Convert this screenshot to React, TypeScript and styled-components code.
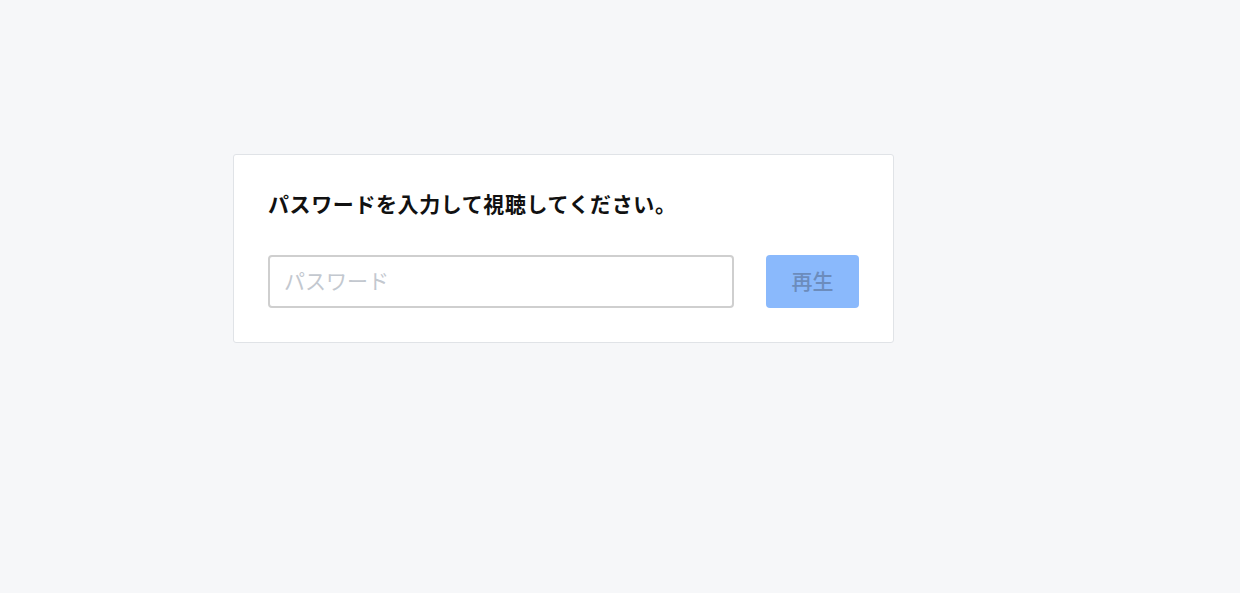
import React from "react";
import styled, { createGlobalStyle } from "styled-components";

const Global = createGlobalStyle`
  html, body { margin: 0; padding: 0; background: #f6f7f9; }
  body { font-family: "Noto Sans CJK JP", "Noto Sans", sans-serif; }
`;

const Page = styled.div`
  min-height: 593px;
  padding: 154px 0 0 233px;
  box-sizing: border-box;
`;

const Card = styled.div`
  width: 661px;
  box-sizing: border-box;
  background: #ffffff;
  border: 1px solid #e0e3e7;
  border-radius: 3px;
  padding: 34px 33px 34px 34px;
`;

const Title = styled.h2`
  margin: 0;
  font-size: 21px;
  line-height: 28px;
  font-weight: 700;
  letter-spacing: 0.6px;
  color: #111;
`;

const Row = styled.div`
  display: flex;
  align-items: center;
  gap: 32px;
  margin-top: 38px;
`;

const Input = styled.input`
  width: 466px;
  height: 53px;
  box-sizing: border-box;
  border: 2px solid #cfcfcf;
  border-radius: 4px;
  padding: 0 14px 3px;
  font-family: "Noto Sans CJK JP", sans-serif;
  font-size: 21px;
  color: #333;
  background: #fff;
  outline: none;
  &::placeholder { color: #c3c8cf; }
`;

const Button = styled.button`
  width: 93px;
  height: 53px;
  border: none;
  border-radius: 4px;
  background: #8ab9fc;
  color: #6c8cbc;
  font-family: "Noto Sans CJK JP", sans-serif;
  font-size: 21px;
  font-weight: 500;
  padding: 0 0 4px;
  cursor: not-allowed;
`;

export default function App() {
  return (
    <>
      <Global />
      <Page>
        <Card>
          <Title>パスワードを入力して視聴してください。</Title>
          <Row>
            <Input type="password" placeholder="パスワード" />
            <Button disabled>再生</Button>
          </Row>
        </Card>
      </Page>
    </>
  );
}
